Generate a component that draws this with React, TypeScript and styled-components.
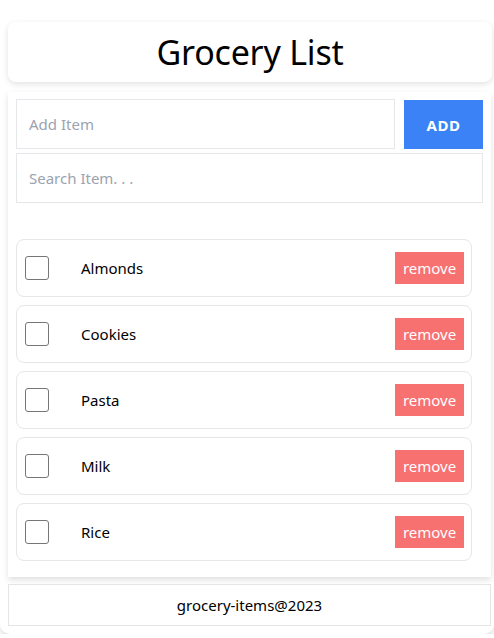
import React from "react";
import styled, { createGlobalStyle } from "styled-components";

const Global = createGlobalStyle`
  html, body { margin: 0; padding: 0; background: #fff; }
  body { font-family: "Noto Sans", "Open Sans", sans-serif; color: #000; }
  * { box-sizing: border-box; }
`;

const Shell = styled.div`
  width: 494px;
  padding: 22px 3px 8px 8px;
  border-radius: 0 0 10px 10px;
  box-shadow: 0 4px 6px rgba(0, 0, 0, 0.12);
  display: flex;
  flex-direction: column;
`;

const Header = styled.header`
  height: 60px;
  margin-right: -1px;
  border-radius: 8px;
  box-shadow: 0 2px 6px rgba(0, 0, 0, 0.12);
  display: flex;
  align-items: center;
  justify-content: center;
`;

const Title = styled.h1`
  margin: 0;
  font-size: 34px;
  font-weight: 400;
  letter-spacing: -0.2px;
`;

const Main = styled.main`
  margin-top: 10px;
  padding: 7px 8px 16px 8px;
  box-shadow: 0 3px 6px rgba(0, 0, 0, 0.12);
  display: flex;
  flex-direction: column;
`;

const AddRow = styled.form`
  display: flex;
  gap: 9px;
  margin: 0;
`;

const TextInput = styled.input`
  height: 50px;
  border: 1px solid #e5e7eb;
  padding: 0 12px;
  font-family: inherit;
  font-size: 15px;
  outline: none;
  flex: 1;
  &::placeholder { color: #9ca3af; }
`;

const SearchInput = styled(TextInput)`
  margin-top: 4px;
  flex: none;
  width: 100%;
`;

const AddButton = styled.button`
  width: 79px;
  height: 49px;
  margin-top: 1px;
  border: none;
  background: #3b82f6;
  color: #fff;
  font-family: inherit;
  font-weight: 700;
  font-size: 15px;
  letter-spacing: 0.5px;
`;

const List = styled.ul`
  list-style: none;
  margin: 36px 11px 0 0;
  padding: 0;
  display: flex;
  flex-direction: column;
  gap: 8px;
`;

const Item = styled.li`
  height: 58px;
  border: 1px solid #e5e7eb;
  border-radius: 8px;
  padding: 0 7px 0 8px;
  display: flex;
  align-items: center;
`;

const Check = styled.span`
  width: 24px;
  height: 24px;
  border: 1px solid #767676;
  border-radius: 3px;
  flex: none;
`;

const Name = styled.span`
  margin-left: 32px;
  font-size: 15px;
  flex: 1;
`;

const Remove = styled.button`
  width: 69px;
  height: 32px;
  border: none;
  background: #f87171;
  color: #fff;
  font-family: inherit;
  font-size: 15px;
  padding: 0;
`;

const Footer = styled.footer`
  margin-top: 7px;
  height: 42px;
  border: 1px solid #e5e5e5;
  display: flex;
  align-items: center;
  justify-content: center;
  font-size: 15px;
`;

const items = ["Almonds", "Cookies", "Pasta", "Milk", "Rice"];

export default function App() {
  return (
    <>
      <Global />
      <Shell>
        <Header>
          <Title>Grocery List</Title>
        </Header>
        <Main>
          <AddRow onSubmit={(e) => e.preventDefault()}>
            <TextInput placeholder="Add Item" />
            <AddButton type="submit">ADD</AddButton>
          </AddRow>
          <SearchInput placeholder="Search Item. . ." />
          <List>
            {items.map((it) => (
              <Item key={it}>
                <Check />
                <Name>{it}</Name>
                <Remove>remove</Remove>
              </Item>
            ))}
          </List>
        </Main>
        <Footer>grocery-items@2023</Footer>
      </Shell>
    </>
  );
}
